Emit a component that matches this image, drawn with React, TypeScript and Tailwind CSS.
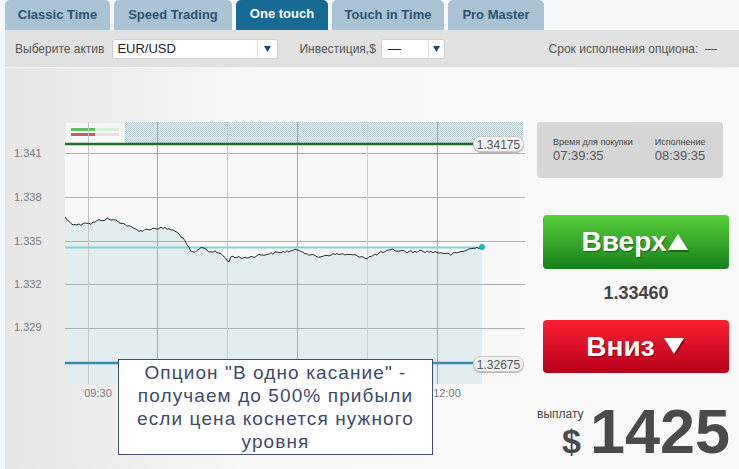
import React from "react";

const keypts: [number, number][] = [
  [65, 217], [70, 223], [80, 225], [85, 222], [90, 224], [100, 220], [108, 219], [118, 221],
  [128, 226], [135, 229], [142, 231], [148, 229], [160, 228], [170, 229], [178, 233], [183, 238],
  [186, 244], [190, 250], [194, 254], [198, 250], [203, 247], [208, 251], [215, 252], [222, 254],
  [228, 262], [232, 256], [240, 258], [250, 257], [260, 255], [275, 253], [290, 251], [300, 250],
  [310, 255], [318, 257], [327, 255], [340, 254], [360, 256], [367, 258], [380, 253], [393, 250],
  [410, 252], [420, 251], [433, 252], [445, 253], [450, 255], [460, 252], [470, 249], [482, 247],
];

function buildPath(): string {
  let seed = 12345;
  const rnd = () => {
    seed = (seed * 1103515245 + 12345) % 2147483648;
    return seed / 2147483648;
  };
  const pts: [number, number][] = [];
  for (let x = 65; x <= 482; x += 2) {
    let i = 0;
    while (i < keypts.length - 2 && keypts[i + 1][0] < x) i++;
    const [x0, y0] = keypts[i];
    const [x1, y1] = keypts[i + 1];
    const t = Math.min(1, Math.max(0, (x - x0) / (x1 - x0)));
    let y = y0 + (y1 - y0) * t;
    if (x > 66 && x < 480) y += (rnd() - 0.5) * 2.6;
    pts.push([x, y]);
  }
  pts[pts.length - 1] = [482, 247];
  return pts.map((p, i) => `${i ? "L" : "M"}${p[0].toFixed(1)},${p[1].toFixed(1)}`).join(" ");
}

const linePath = buildPath();
const FF = "Liberation Sans, Arial, sans-serif";

function Chart() {
  const hLines = [153.5, 197.5, 241.5, 284.5, 328.5];
  const vLines: [number, string][] = [
    [88.5, "#c4c4c4"], [157.5, "#a8a8a8"], [227.5, "#c8c8c8"], [297.5, "#a8a8a8"], [367.5, "#cfcfcf"], [437.5, "#a8a8a8"],
  ];
  const yLabels: [string, number][] = [["1.341", 157], ["1.338", 201], ["1.335", 245], ["1.332", 288], ["1.329", 331]];
  return (
    <svg width="530" height="402" viewBox="5 67 530 402" className="block">
      <defs>
        <pattern id="hatch" width="2" height="2" patternUnits="userSpaceOnUse">
          <rect width="2" height="2" fill="#eef3f4" />
          <rect width="1" height="1" fill="#b6c9d0" />
          <rect x="1" y="1" width="1" height="1" fill="#b6c9d0" />
        </pattern>
      </defs>
      <rect x="65" y="122" width="458" height="262" fill="#f8f8f8" />
      <rect x="125" y="122" width="398" height="22" fill="url(#hatch)" />
      <rect x="65.5" y="122.5" width="59" height="21" fill="#f6f7f7" stroke="#d8e2e5" strokeDasharray="1 1" />
      <rect x="71" y="128" width="24" height="3" fill="#5cbf5c" />
      <rect x="95" y="128" width="24" height="3" fill="#d6f0d6" />
      <rect x="71" y="133" width="24" height="3" fill="#c06262" />
      <rect x="95" y="133" width="24" height="3" fill="#f7dcdc" />
      <path d={`${linePath} L482,384 L65,384 Z`} fill="#e1edef" />
      {hLines.map((y) => (
        <line key={y} x1="65" x2="525" y1={y} y2={y} stroke="#b0b0b0" strokeWidth="1" />
      ))}
      {vLines.map(([x, c]) => (
        <line key={x} x1={x} x2={x} y1="122" y2="384" stroke={c} strokeWidth="1" />
      ))}
      <line x1="65" x2="482" y1="247.5" y2="247.5" stroke="#7fd5d5" strokeWidth="2" />
      <path d={linePath} fill="none" stroke="#2d2d2d" strokeWidth="1" strokeLinejoin="round" />
      <circle cx="482" cy="247" r="3" fill="#19b3b8" />
      <line x1="65" x2="474" y1="144" y2="144" stroke="#1e6f2b" strokeWidth="2.5" />
      <line x1="65" x2="474" y1="363" y2="363" stroke="#3a8db0" strokeWidth="2.5" />
      <g>
        <rect x="473.5" y="138" width="50" height="15" rx="7" fill="#b8b8b8" />
        <rect x="473.5" y="136.5" width="50" height="15" rx="7" fill="#f1f1f1" stroke="#c9c9c9" />
        <text x="498.5" y="148.5" textAnchor="middle" fontSize="12" fill="#555" fontFamily={FF}>1.34175</text>
      </g>
      <g>
        <rect x="473.5" y="358" width="50" height="15" rx="7" fill="#b8b8b8" />
        <rect x="473.5" y="356.5" width="50" height="15" rx="7" fill="#f1f1f1" stroke="#c9c9c9" />
        <text x="498.5" y="368.5" textAnchor="middle" fontSize="12" fill="#555" fontFamily={FF}>1.32675</text>
      </g>
      {yLabels.map(([t, y]) => (
        <text key={t} x="14" y={y} fontSize="11" fill="#7a7a7a" fontFamily={FF}>{t}</text>
      ))}
      <text x="98" y="397" textAnchor="middle" fontSize="11" fill="#7a7a7a" fontFamily={FF}>09:30</text>
      <text x="447" y="397" textAnchor="middle" fontSize="11" fill="#7a7a7a" fontFamily={FF}>12:00</text>
    </svg>
  );
}

function Arrow() {
  return (
    <svg width="7" height="6" viewBox="0 0 7 6">
      <path d="M0 0 H7 L3.5 6 Z" fill="#1d4b6b" />
    </svg>
  );
}

function Tri({ up }: { up: boolean }) {
  return (
    <svg width="23" height="19" viewBox="0 0 23 19" className="shrink-0">
      <path d={up ? "M11 2 L21 18 H1 Z" : "M1 2 H21 L11 18 Z"} fill="rgba(0,0,0,0.35)" transform="translate(1.2,1.2)" />
      <path d={up ? "M11 1 L21 17 H1 Z" : "M1 1 H21 L11 17 Z"} fill="#ffffff" />
    </svg>
  );
}

export default function App() {
  return (
    <div className="w-[739px] h-[469px] overflow-hidden bg-[#f5f7fa] pl-[5px] font-['Liberation_Sans',Arial,sans-serif]">
      <div className="flex h-[30px] items-end gap-[4px]">
        <div className="flex h-[30px] w-[105px] items-center justify-center rounded-t-[5px] bg-[#a9c2d4] pb-[1px] text-[13px] font-bold text-[#2c5370]">Classic Time</div>
        <div className="flex h-[30px] w-[118px] items-center justify-center rounded-t-[5px] bg-[#a9c2d4] pb-[1px] text-[13px] font-bold text-[#2c5370]">Speed Trading</div>
        <div className="flex h-[30px] w-[92px] items-center justify-center rounded-t-[5px] bg-[#176a93] pb-[3px] text-[13px] font-bold text-white">One touch</div>
        <div className="flex h-[30px] w-[112px] items-center justify-center rounded-t-[5px] bg-[#a9c2d4] pb-[1px] text-[13px] font-bold text-[#2c5370]">Touch in Time</div>
        <div className="flex h-[30px] w-[96px] items-center justify-center rounded-t-[5px] bg-[#a9c2d4] pb-[1px] text-[13px] font-bold text-[#2c5370]">Pro Master</div>
      </div>
      <div className="flex h-[37px] items-center bg-[#e1e1e1] pl-[10px] pr-[22px] text-[12px] text-[#555]">
        <span>Выберите актив</span>
        <div className="ml-[8px] flex h-[20px] w-[166px] items-center rounded-[3px] border border-[#cfcfcf] bg-white">
          <span className="flex-1 pl-[4px] text-[13px] text-[#222]">EUR/USD</span>
          <div className="flex h-full w-[20px] items-center justify-center border-l border-[#e2e2e2]">
            <Arrow />
          </div>
        </div>
        <span className="ml-[21px]">Инвестиция,$</span>
        <div className="ml-[5px] flex h-[20px] w-[64px] items-center rounded-[3px] border border-[#cfcfcf] bg-white">
          <span className="flex-1 pl-[6px] text-[13px] text-[#222]">—</span>
          <div className="flex h-full w-[16px] items-center justify-center border-l border-[#e2e2e2]">
            <Arrow />
          </div>
        </div>
        <span className="ml-auto">Срок исполнения опциона:&nbsp; —</span>
      </div>
      <div className="flex h-[402px] border-t border-[#f2f2f2] bg-linear-to-r from-[#e6e6e6] via-[#f8f8f8] via-35% to-[#f9f9f9]">
        <div className="relative w-[530px] -mt-[1px]">
          <Chart />
          <div className="absolute left-[113px] top-[292px] flex h-[96px] w-[315px] flex-col items-center justify-center border border-[#3c4e6e] bg-white text-center text-[19px] leading-[23px] tracking-[1.1px] text-[#3d4a6b]">
            <span>Опцион "В одно касание" -</span>
            <span>получаем до 500% прибыли</span>
            <span>если цена коснется нужного</span>
            <span>уровня</span>
          </div>
        </div>
        <div className="flex flex-1 flex-col pl-[2px]">
          <div className="mt-[54px] flex h-[56px] w-[186px] gap-[22px] rounded-[4px] bg-[#d6d6d6] pl-[16px] pt-[14px]">
            <div className="flex flex-col">
              <span className="text-[9px] leading-[12px] text-[#444]">Время для покупки</span>
              <span className="text-[13px] leading-[16px] text-[#555]">07:39:35</span>
            </div>
            <div className="flex flex-col">
              <span className="text-[9px] leading-[12px] text-[#444]">Исполнение</span>
              <span className="text-[13px] leading-[16px] text-[#555]">08:39:35</span>
            </div>
          </div>
          <div className="ml-[6px] mt-[37px] flex h-[54px] w-[186px] items-center justify-center gap-[1px] rounded-[4px] bg-linear-to-b from-[#56d13a] to-[#15801c] text-[28px] font-bold text-white [text-shadow:1px_1px_1px_rgba(0,0,0,0.35)]">
            <span>Вверх</span>
            <Tri up />
          </div>
          <div className="ml-[6px] mt-[11px] w-[186px] text-center text-[18px] font-bold leading-[26px] text-[#444]">1.33460</div>
          <div className="ml-[6px] mt-[14px] flex h-[53px] w-[186px] items-center justify-center gap-[8px] rounded-[4px] bg-linear-to-b from-[#fc1f31] to-[#b6001a] text-[28px] font-bold text-white [text-shadow:1px_1px_1px_rgba(0,0,0,0.35)]">
            <span>Вниз</span>
            <Tri up={false} />
          </div>
          <div className="relative mt-[32px] h-[60px]">
            <span className="absolute left-0 top-[3px] text-[12px] leading-[12px] text-[#444]">выплату</span>
            <div className="absolute left-[25px] top-[-5px] flex items-baseline gap-[9px] font-bold text-[#4a4a4a]">
              <span className="text-[34px] leading-none">$</span>
              <span className="text-[63px] leading-none">1425</span>
            </div>
          </div>
        </div>
      </div>
    </div>
  );
}
